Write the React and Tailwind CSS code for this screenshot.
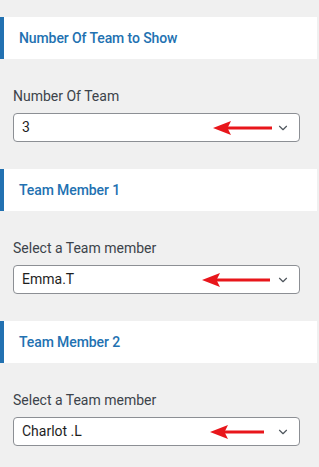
import { ChevronDown } from 'lucide-react'

function RedArrow({ left, width }) {
  return (
    <svg
      className="absolute top-1/2 -translate-y-1/2 pointer-events-none"
      style={{ left, width }}
      height="16"
      viewBox={`0 0 ${width} 16`}
    >
      <line x1="14" y1="8" x2={width} y2="8" stroke="#e8161b" strokeWidth="3" />
      <polygon points="0,8 18,1 14.5,8 18,15" fill="#e8161b" />
    </svg>
  )
}

function Section({ title, label, value, arrowLeft, arrowWidth }) {
  return (
    <div className="flex flex-col">
      <div className="h-[42px] mr-[2px] bg-white border-l-4 border-[#2271b1] flex items-center pl-[15px]">
        <span className="text-[14px] font-medium text-[#2271b1] tracking-[-0.1px]">{title}</span>
      </div>
      <div className="px-[13px] pt-[27px]">
        <div className="text-[14px] text-[#3c434a] leading-5">{label}</div>
        <div className="relative mt-[7px] mr-[6px] h-[29px] bg-white border border-[#8c8f94] rounded-[4px] flex items-center pl-[8px]">
          <span className="text-[14px] text-[#1e1e1e]">{value}</span>
          <ChevronDown className="absolute right-[9px] top-1/2 -translate-y-1/2 text-[#50575e]" size={14} strokeWidth={2} />
          <RedArrow left={arrowLeft} width={arrowWidth} />
        </div>
      </div>
    </div>
  )
}

export default function App() {
  return (
    <div className="w-[319px] h-[467px] bg-[#f0f0f0] pt-[17px] flex flex-col gap-[27px] overflow-hidden" style={{ fontFamily: 'Roboto, "Noto Sans", sans-serif' }}>
      <Section title="Number Of Team to Show" label="Number Of Team" value="3" arrowLeft={199} arrowWidth={59} />
      <Section title="Team Member 1" label="Select a Team member" value="Emma.T" arrowLeft={188} arrowWidth={68} />
      <Section title="Team Member 2" label="Select a Team member" value="Charlot .L" arrowLeft={196} arrowWidth={54} />
    </div>
  )
}
